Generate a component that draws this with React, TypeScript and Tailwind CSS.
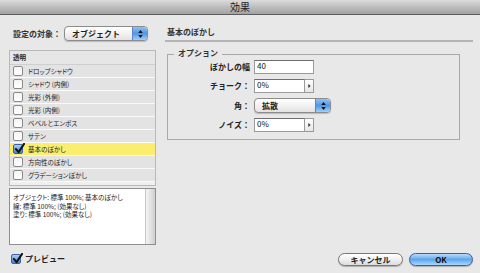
import React from 'react';

// Effects dialog (InDesign, Mac OS X Aqua style)

const FONT = { fontFamily: '"Noto Sans CJK JP", "Liberation Sans", sans-serif' };

const EFFECTS: { label: string; checked?: boolean }[] = [
  { label: 'ドロップシャドウ' },
  { label: 'シャドウ (内側)' },
  { label: '光彩 (外側)' },
  { label: '光彩 (内側)' },
  { label: 'ベベルとエンボス' },
  { label: 'サテン' },
  { label: '基本のぼかし', checked: true },
  { label: '方向性のぼかし' },
  { label: 'グラデーションぼかし' },
];

function CheckBox({ checked }: { checked?: boolean }) {
  if (checked) {
    return (
      <span className="relative flex h-[10px] w-[10px] shrink-0 items-center justify-center rounded-[2px] border border-[#3b5fa8] bg-gradient-to-b from-[#a9cdf5] to-[#3d82d8]">
        <svg viewBox="0 0 12 12" className="absolute -top-[2px] left-[0px] h-[11px] w-[11px]">
          <path d="M2 6.5 L5 10 L11 1" fill="none" stroke="#111" strokeWidth="2.2" strokeLinecap="round" strokeLinejoin="round" />
        </svg>
      </span>
    );
  }
  return (
    <span className="h-[10px] w-[10px] shrink-0 rounded-[2px] border border-[#8a8a8a] bg-gradient-to-b from-[#f4f4f4] to-[#ffffff]" />
  );
}

function Stepper() {
  return (
    <span className="flex h-full w-[15px] flex-col items-center justify-center gap-[2px] rounded-r-[4px] border-l border-[#5a86c8] bg-gradient-to-b from-[#8fc0f4] via-[#4f97e6] to-[#9fd0fa]">
      <svg viewBox="0 0 6 4" className="h-[3px] w-[5px]"><path d="M3 0 L6 4 L0 4 Z" fill="#111" /></svg>
      <svg viewBox="0 0 6 4" className="h-[3px] w-[5px]"><path d="M0 0 L6 0 L3 4 Z" fill="#111" /></svg>
    </span>
  );
}

function Popup({ label, width }: { label: string; width: string }) {
  return (
    <div
      className={`flex h-[15px] ${width} items-stretch overflow-hidden rounded-[4px] border border-[#8c8c8c] bg-gradient-to-b from-[#ffffff] via-[#f2f2f2] to-[#e2e2e2] shadow-[0_1px_1px_rgba(0,0,0,0.2)]`}
    >
      <span className="flex flex-1 items-center pl-[7px] text-[8px] font-bold leading-none text-[#222]">{label}</span>
      <Stepper />
    </div>
  );
}

function NumField({ value, arrow }: { value: string; arrow?: boolean }) {
  return (
    <div className="flex h-[14px] items-stretch">
      <div className={`flex ${arrow ? 'w-[51px]' : 'w-[60px]'} items-start border border-[#9a9a9a] border-t-[#6e6e6e] bg-white pl-[2px] text-[8px] leading-[10px] text-[#111]`}>
        {value}
      </div>
      {arrow && (
        <div className="flex w-[9px] items-center justify-center border border-l-0 border-[#9a9a9a] bg-gradient-to-b from-[#ffffff] to-[#e6e6e6]">
          <svg viewBox="0 0 3 5" className="h-[4px] w-[3px]"><path d="M0 0 L3 2.5 L0 5 Z" fill="#333" /></svg>
        </div>
      )}
    </div>
  );
}

function OptionRow({ label, children }: { label: string; children: React.ReactNode }) {
  return (
    <div className="flex items-center">
      <span className="w-[86px] shrink-0 pr-[4px] text-right text-[8px] font-bold leading-none text-[#222]">{label}</span>
      {children}
    </div>
  );
}

export default function App() {
  return (
    <div className="flex h-[273px] w-[480px] flex-col overflow-hidden bg-[#e8e8e8] text-[#1a1a1a]" style={FONT}>
      {/* title bar */}
      <div className="flex h-[15px] shrink-0 items-center justify-center border-b border-[#5d5d5d] bg-gradient-to-b from-[#dcdcdc] via-[#bdbdbd] to-[#a2a2a2] text-[10px] leading-none text-[#222]">
        効果
      </div>

      <div className="flex flex-1">
        {/* left column */}
        <div className="flex w-[156px] shrink-0 flex-col pl-[9px]">
          <div className="mt-[11px] flex items-center">
            <span className="pl-[4px] text-[8px] font-bold leading-none text-[#333]">設定の対象：</span>
            <div className="ml-[3px]">
              <Popup label="オブジェクト" width="w-[84px]" />
            </div>
          </div>

          {/* effect list */}
          <div className="mt-[9px] flex h-[136px] flex-col border border-[#b8b8b8] bg-[#efefef] [font-feature-settings:'palt']">
            <div className="flex h-[14px] items-center border-b border-[#cfcfcf] bg-[#e6e6e6] pl-[3px] text-[6.5px] font-bold leading-none text-[#222]">
              透明
            </div>
            {EFFECTS.map((e) => (
              <div
                key={e.label}
                className={`flex h-[13px] items-center gap-[5px] border-b border-[#fafafa] pl-[3px] text-[6.5px] leading-none text-[#222] ${
                  e.checked ? 'bg-[#fbee6e]' : 'bg-[#e3e3e3]'
                }`}
              >
                <CheckBox checked={e.checked} />
                <span>{e.label}</span>
              </div>
            ))}
          </div>

          {/* summary box */}
          <div className="mt-[2px] flex h-[57px] border border-[#8f8f8f] bg-white">
            <div className="flex-1 pl-[3px] pt-[4px] text-[6.5px] leading-[8.5px] text-[#222] [font-feature-settings:'palt']">
              <div>オブジェクト: 標準 100%; 基本のぼかし</div>
              <div>線: 標準 100%; (効果なし)</div>
              <div>塗り: 標準 100%; (効果なし)</div>
            </div>
            <div className="w-[10px] border-l border-[#c8c8c8] bg-gradient-to-r from-[#f4f4f4] via-[#e2e2e2] to-[#cfcfcf]" />
          </div>

          <div className="mt-[9px] flex items-center gap-[4px] pl-[2px]">
            <CheckBox checked />
            <span className="text-[8px] font-bold leading-none text-[#222]">プレビュー</span>
          </div>
        </div>

        {/* right column */}
        <div className="ml-[9px] flex flex-1 flex-col pr-[7px]">
          <div className="mt-[13px] border-b-2 border-[#b4b4b4] pb-[4px] pl-[2px] text-[8px] font-bold leading-none text-[#333]">
            基本のぼかし
          </div>

          <div className="relative ml-[2px] mr-[13px] mt-[12px] flex h-[86px] flex-col gap-[5px] border border-[#a9a9a9] pt-[5px]">
            <span className="absolute -top-[6px] left-[6px] bg-[#e8e8e8] px-[4px] text-[8px] font-bold leading-none text-[#333]">
              オプション
            </span>
            <OptionRow label="ぼかしの幅">
              <NumField value="40" />
            </OptionRow>
            <OptionRow label="チョーク：">
              <NumField value="0%" arrow />
            </OptionRow>
            <OptionRow label="角：">
              <Popup label="拡散" width="w-[77px]" />
            </OptionRow>
            <OptionRow label="ノイズ：">
              <NumField value="0%" arrow />
            </OptionRow>
          </div>

          <div className="mt-auto mb-[7px] flex justify-end gap-[6px]">
            <button className="flex h-[13px] w-[65px] items-center justify-center rounded-full border border-[#777] bg-gradient-to-b from-[#ffffff] via-[#f0f0f0] to-[#dcdcdc] text-[8px] font-bold leading-none text-[#222] shadow-[0_1px_1px_rgba(0,0,0,0.25)]">
              キャンセル
            </button>
            <button className="flex h-[13px] w-[64px] items-center justify-center rounded-full border border-[#3a5d9c] bg-gradient-to-b from-[#b9dcfb] via-[#5da6ec] to-[#a8d8fc] text-[8px] font-bold leading-none text-[#111] shadow-[0_1px_1px_rgba(0,0,0,0.25)]">
              OK
            </button>
          </div>
        </div>
      </div>
    </div>
  );
}
